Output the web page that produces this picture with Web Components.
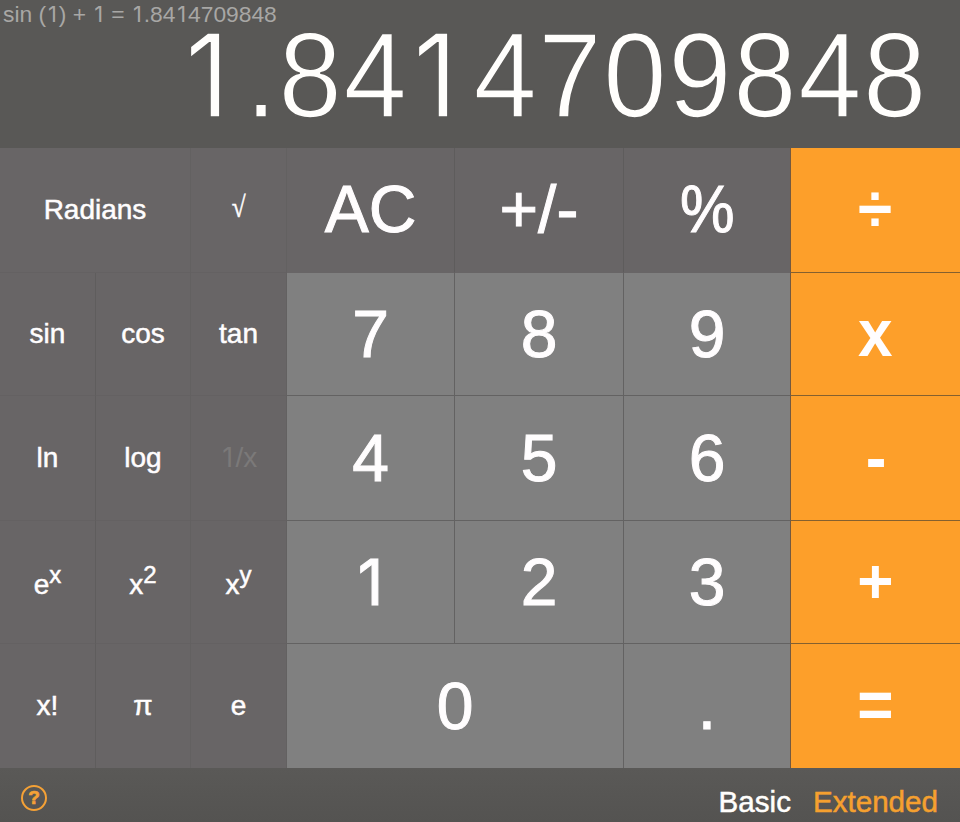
<!DOCTYPE html>
<html lang="en">
<head>
<meta charset="utf-8">
<title>Calculator</title>
<style>
html,body{margin:0;height:100%;overflow:hidden;background:#595856}
body{font-family:"Liberation Sans",Arial,sans-serif}
</style>
</head>
<body>
<calc-app></calc-app>
<script>
class CalcDisplay extends HTMLElement {
  constructor() {
    super();
    this.attachShadow({mode: 'open'}).innerHTML = `
      <style>
        :host{display:flex;flex-direction:column;height:148px;background:#595856;overflow:hidden}
        .history{height:28px;line-height:28px;padding-left:3px;font-size:22.8px;color:#a8a7a5;white-space:nowrap}
        .value{height:120px;line-height:120px;margin-top:-13px;padding-right:34px;text-align:right;font-size:121px;letter-spacing:1.8px;color:#fffefc;-webkit-text-stroke:1.7px #595856;white-space:nowrap;transform:scaleX(.94);transform-origin:100% 50%}
      </style>
      <div class="history"><slot name="history"></slot></div>
      <div class="value"><slot></slot></div>`;
  }
}
customElements.define('calc-display', CalcDisplay);

class CalcKey extends HTMLElement {
  constructor() {
    super();
    this.attachShadow({mode: 'open'}).innerHTML = `
      <style>
        :host{display:flex;align-items:center;justify-content:center;box-sizing:border-box;
          background:#808080;color:#fffdfe;font-size:66px;line-height:1;-webkit-text-stroke:1px currentColor;
          border-right:1px solid #636262;border-bottom:1px solid #636262}
        :host([wide]){grid-column:span 2}
        :host([last]){border-bottom:0}
        :host([kind=top]){background:#686566;border-right-color:#5e5c5c;border-bottom-color:#686566;--dy:-1px}
        :host([kind=fn]){background:#686566;font-size:28px;-webkit-text-stroke-width:.5px;border-right-color:#5f5d5d;border-bottom-color:#646162}
        :host([kind=fn][edge]){border-right-color:#636161}
        :host([kind=op]){background:#fd9f2a;font-weight:bold;-webkit-text-stroke-width:0;border-right:0;border-bottom-color:#84602f;--sx:.94;--dy:-1px}
        :host([kind=op][last]){border-bottom:0}
        :host([before-op]){border-right-color:#75593e}
        :host([disabled]){color:#7b7979;-webkit-text-stroke-width:0}
        span{display:block;white-space:nowrap;transform:translateY(var(--dy,0)) scale(var(--sx,1),var(--sy,1))}
        ::slotted(sup){font-size:24px;line-height:0;vertical-align:11px}
      </style>
      <span><slot></slot></span>`;
  }
}
customElements.define('calc-key', CalcKey);

class CalcFooter extends HTMLElement {
  constructor() {
    super();
    this.attachShadow({mode: 'open'}).innerHTML = `
      <style>
        :host{display:flex;align-items:center;height:54px;box-sizing:border-box;padding:14px 22px 0 21px;
          background:linear-gradient(#5a5957,#545351);font-size:29.6px;line-height:40px;color:#fffefc;-webkit-text-stroke:.5px currentColor}
        .help{width:26px;height:26px;margin-top:-8px;margin-right:auto;box-sizing:border-box;border:2.5px solid #f4a136;border-radius:50%;
          color:#f4a136;font-size:19px;font-weight:bold;line-height:22px;text-align:center;-webkit-text-stroke:.7px #f4a136}
        .on{color:#f5a02f;margin-left:22px}
      </style>
      <div class="help">?</div><div>Basic</div><div class="on">Extended</div>`;
  }
}
customElements.define('calc-footer', CalcFooter);

class CalcApp extends HTMLElement {
  constructor() {
    super();
    this.attachShadow({mode: 'open'}).innerHTML = `
      <style>
        :host{display:block;width:960px;height:822px}
        .pad{display:grid;grid-template-columns:96px 95px 96px 168px 169px 167px 169px;
          grid-template-rows:125px 123px 125px 123px 124px}
        .root{font-family:"Liberation Serif",serif;--sy:1.05;--sx:.9;--dy:-2px}
        .pct{--sx:.93}
        .pow{--dy:3px}
        .plus{--sy:.94}
        b{display:inline-block;box-sizing:border-box;width:.582em;text-align:center;font-weight:400;font-family:Inter,sans-serif;font-size:.955em;line-height:0}
        .big > b{width:69.1px;padding-right:10px}
        .digit{padding-right:.06em}
      </style>
      <calc-display class="big"><span slot="history">sin (<b>1</b>) + <b>1</b> = <b>1</b>.84<b>1</b>4709848</span><b>1</b>.84<b>1</b>4709848</calc-display>
      <div class="pad">
        <calc-key kind="fn" wide edge>Radians</calc-key><calc-key kind="fn" edge class="root">√</calc-key>
        <calc-key kind="top">AC</calc-key><calc-key kind="top">+/-</calc-key><calc-key kind="top" before-op class="pct">%</calc-key><calc-key kind="op">÷</calc-key>
        <calc-key kind="fn">sin</calc-key><calc-key kind="fn" edge>cos</calc-key><calc-key kind="fn" edge>tan</calc-key>
        <calc-key>7</calc-key><calc-key>8</calc-key><calc-key before-op>9</calc-key><calc-key kind="op">x</calc-key>
        <calc-key kind="fn">ln</calc-key><calc-key kind="fn" edge>log</calc-key><calc-key kind="fn" edge disabled><b>1</b>/x</calc-key>
        <calc-key>4</calc-key><calc-key>5</calc-key><calc-key before-op>6</calc-key><calc-key kind="op">-</calc-key>
        <calc-key kind="fn" class="pow">e<sup>x</sup></calc-key><calc-key kind="fn" edge class="pow">x<sup>2</sup></calc-key><calc-key kind="fn" edge class="pow">x<sup>y</sup></calc-key>
        <calc-key><b>1</b></calc-key><calc-key>2</calc-key><calc-key before-op>3</calc-key><calc-key kind="op" class="plus">+</calc-key>
        <calc-key kind="fn" last>x!</calc-key><calc-key kind="fn" edge last>π</calc-key><calc-key kind="fn" edge last>e</calc-key>
        <calc-key wide last>0</calc-key><calc-key before-op last>.</calc-key><calc-key kind="op" last>=</calc-key>
      </div>
      <calc-footer></calc-footer>`;
  }
}
customElements.define('calc-app', CalcApp);
</script>
</body>
</html>
